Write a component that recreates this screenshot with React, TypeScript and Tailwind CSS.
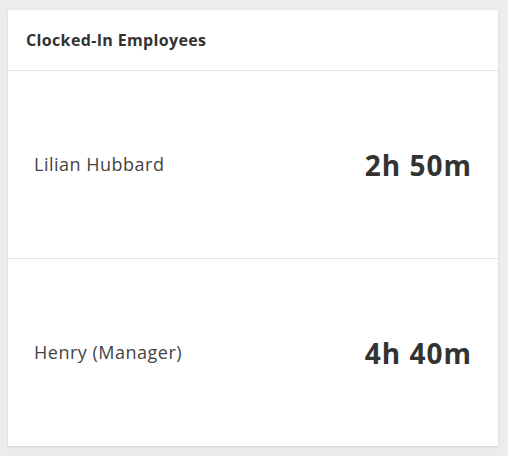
export default function App() {
  const rows = [
    { name: "Lilian Hubbard", time: "2h 50m" },
    { name: "Henry (Manager)", time: "4h 40m" },
  ];
  return (
    <div className="w-[508px] h-[456px] bg-[#ececec] pt-[10px] pl-[8px]" style={{ fontFamily: "'Open Sans', Lato, sans-serif" }}>
      <div className="w-[490px] h-[436px] bg-white flex flex-col shadow-[0_1px_2px_rgba(0,0,0,0.12)]">
        <div className="h-[61px] flex items-center pl-[18px] border-b border-[#e4e4e4]">
          <span className="text-[16px] font-bold text-[#333] tracking-[0.35px]">Clocked-In Employees</span>
        </div>
        {rows.map((r, i) => (
          <div key={r.name} className={`flex-1 flex items-center justify-between pl-[26px] pr-[27px] ${i === 0 ? "border-b border-[#e4e4e4]" : ""}`}>
            <span className="text-[18px] text-[#444] tracking-[0.5px]">{r.name}</span>
            <span className="text-[28px] font-bold text-[#333] tracking-[1px] -mr-[1px]">{r.time}</span>
          </div>
        ))}
      </div>
    </div>
  );
}
